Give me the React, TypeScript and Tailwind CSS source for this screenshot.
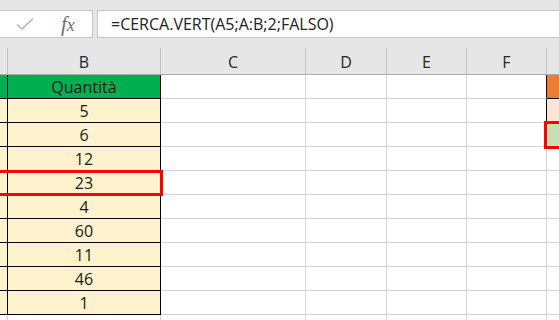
import React from "react";

const cols = [8, 153, 145, 81, 80, 80];
const values = ["5", "6", "12", "23", "4", "60", "11", "46", "1"];

function Row({ children }: { children: React.ReactNode }) {
  return <div className="flex h-[24px]">{children}</div>;
}

export default function App() {
  const font = { fontFamily: '"Open Sans", "Liberation Sans", sans-serif' };
  return (
    <div className="w-[559px] h-[320px] overflow-hidden bg-white relative" style={font}>
      {/* toolbar */}
      <div className="h-[48px] bg-[#e6e6e6] flex items-start pt-[10px]">
        <div className="w-[93px] h-[28px] bg-white border border-[#c6c6c6] border-l-0 flex items-center shrink-0">
          <svg width="20" height="14" viewBox="0 0 20 14" className="ml-[15px]">
            <path d="M2 7.5 L7 12 L18 1.5" fill="none" stroke="#b4b4b4" strokeWidth="1.6" />
          </svg>
          <span
            className="ml-[26px] text-[21px] italic text-[#6f6f6f] leading-none"
            style={{ fontFamily: '"Liberation Serif", serif' }}
          >
            f<span className="text-[18px]">x</span>
          </span>
        </div>
        <div className="ml-[4px] flex-1 h-[28px] bg-white border border-[#c6c6c6] border-r-0 flex items-center pl-[13px] text-[16px] text-[#222]">
          =CERCA.VERT(A5;A:B;2;FALSO)
        </div>
      </div>
      {/* column headers */}
      <div className="flex h-[27px] bg-[#e6e6e6] border-b border-[#ababab] text-[16px] text-[#262626]">
        {["", "B", "C", "D", "E", "F", ""].map((l, i) => (
          <div
            key={i}
            className="border-r border-[#c0c0c0] flex items-center justify-center shrink-0 pt-[2px]"
            style={{ width: i < cols.length ? cols[i] : 40, borderRightWidth: i === 6 ? 0 : 1 }}
          >
            {l}
          </div>
        ))}
      </div>
      {/* header row */}
      <Row>
        <div className="w-[8px] bg-[#00b050] border-r border-b border-black shrink-0" />
        <div className="w-[153px] bg-[#00b050] border-r border-b border-black shrink-0 flex items-center justify-center text-[16px] text-[#1a1a1a]">
          Quantità
        </div>
        <div className="w-[145px] border-r border-b border-[#d4d4d4] shrink-0" />
        <div className="w-[81px] border-r border-b border-[#d4d4d4] shrink-0" />
        <div className="w-[80px] border-r border-b border-[#d4d4d4] shrink-0" />
        <div className="w-[80px] border-r border-b border-r-black border-b-[#d4d4d4] shrink-0" />
        <div className="flex-1 bg-[#ed7d31] border-b border-black" />
      </Row>
      {values.map((v, i) => (
        <Row key={i}>
          <div className="w-[8px] bg-[#fff2cc] border-r border-b border-black shrink-0" />
          <div className="w-[153px] bg-[#fff2cc] border-r border-b border-black shrink-0 flex items-center justify-center text-[16px] text-[#1a1a1a]">
            {v}
          </div>
          <div className="w-[145px] border-r border-b border-[#d4d4d4] shrink-0" />
          <div className="w-[81px] border-r border-b border-[#d4d4d4] shrink-0" />
          <div className="w-[80px] border-r border-b border-[#d4d4d4] shrink-0" />
          <div className={`w-[80px] border-r border-b shrink-0 ${i === 0 ? "border-r-black border-b-[#d4d4d4]" : "border-[#d4d4d4]"}`} />
          <div
            className={`flex-1 border-b ${
              i === 0 ? "bg-[#fce4d6] border-black" : i === 1 ? "bg-[#c6e0b4] border-[#d4d4d4]" : "border-[#d4d4d4]"
            }`}
          />
        </Row>
      ))}
      <Row>
        <div className="w-[8px] border-r border-[#d4d4d4] shrink-0" />
        <div className="w-[153px] border-r border-[#d4d4d4] shrink-0" />
        <div className="w-[145px] border-r border-[#d4d4d4] shrink-0" />
        <div className="w-[81px] border-r border-[#d4d4d4] shrink-0" />
        <div className="w-[80px] border-r border-[#d4d4d4] shrink-0" />
        <div className="w-[80px] border-r border-[#d4d4d4] shrink-0" />
        <div className="flex-1" />
      </Row>
      {/* red selection outlines */}
      <div className="absolute left-[-4px] top-[170px] w-[167px] h-[26px] border-[3px] border-[#ff0000]" />
      <div className="absolute left-[544px] top-[121px] w-[30px] h-[28px] border-[3px] border-[#ff0000]" />
    </div>
  );
}
